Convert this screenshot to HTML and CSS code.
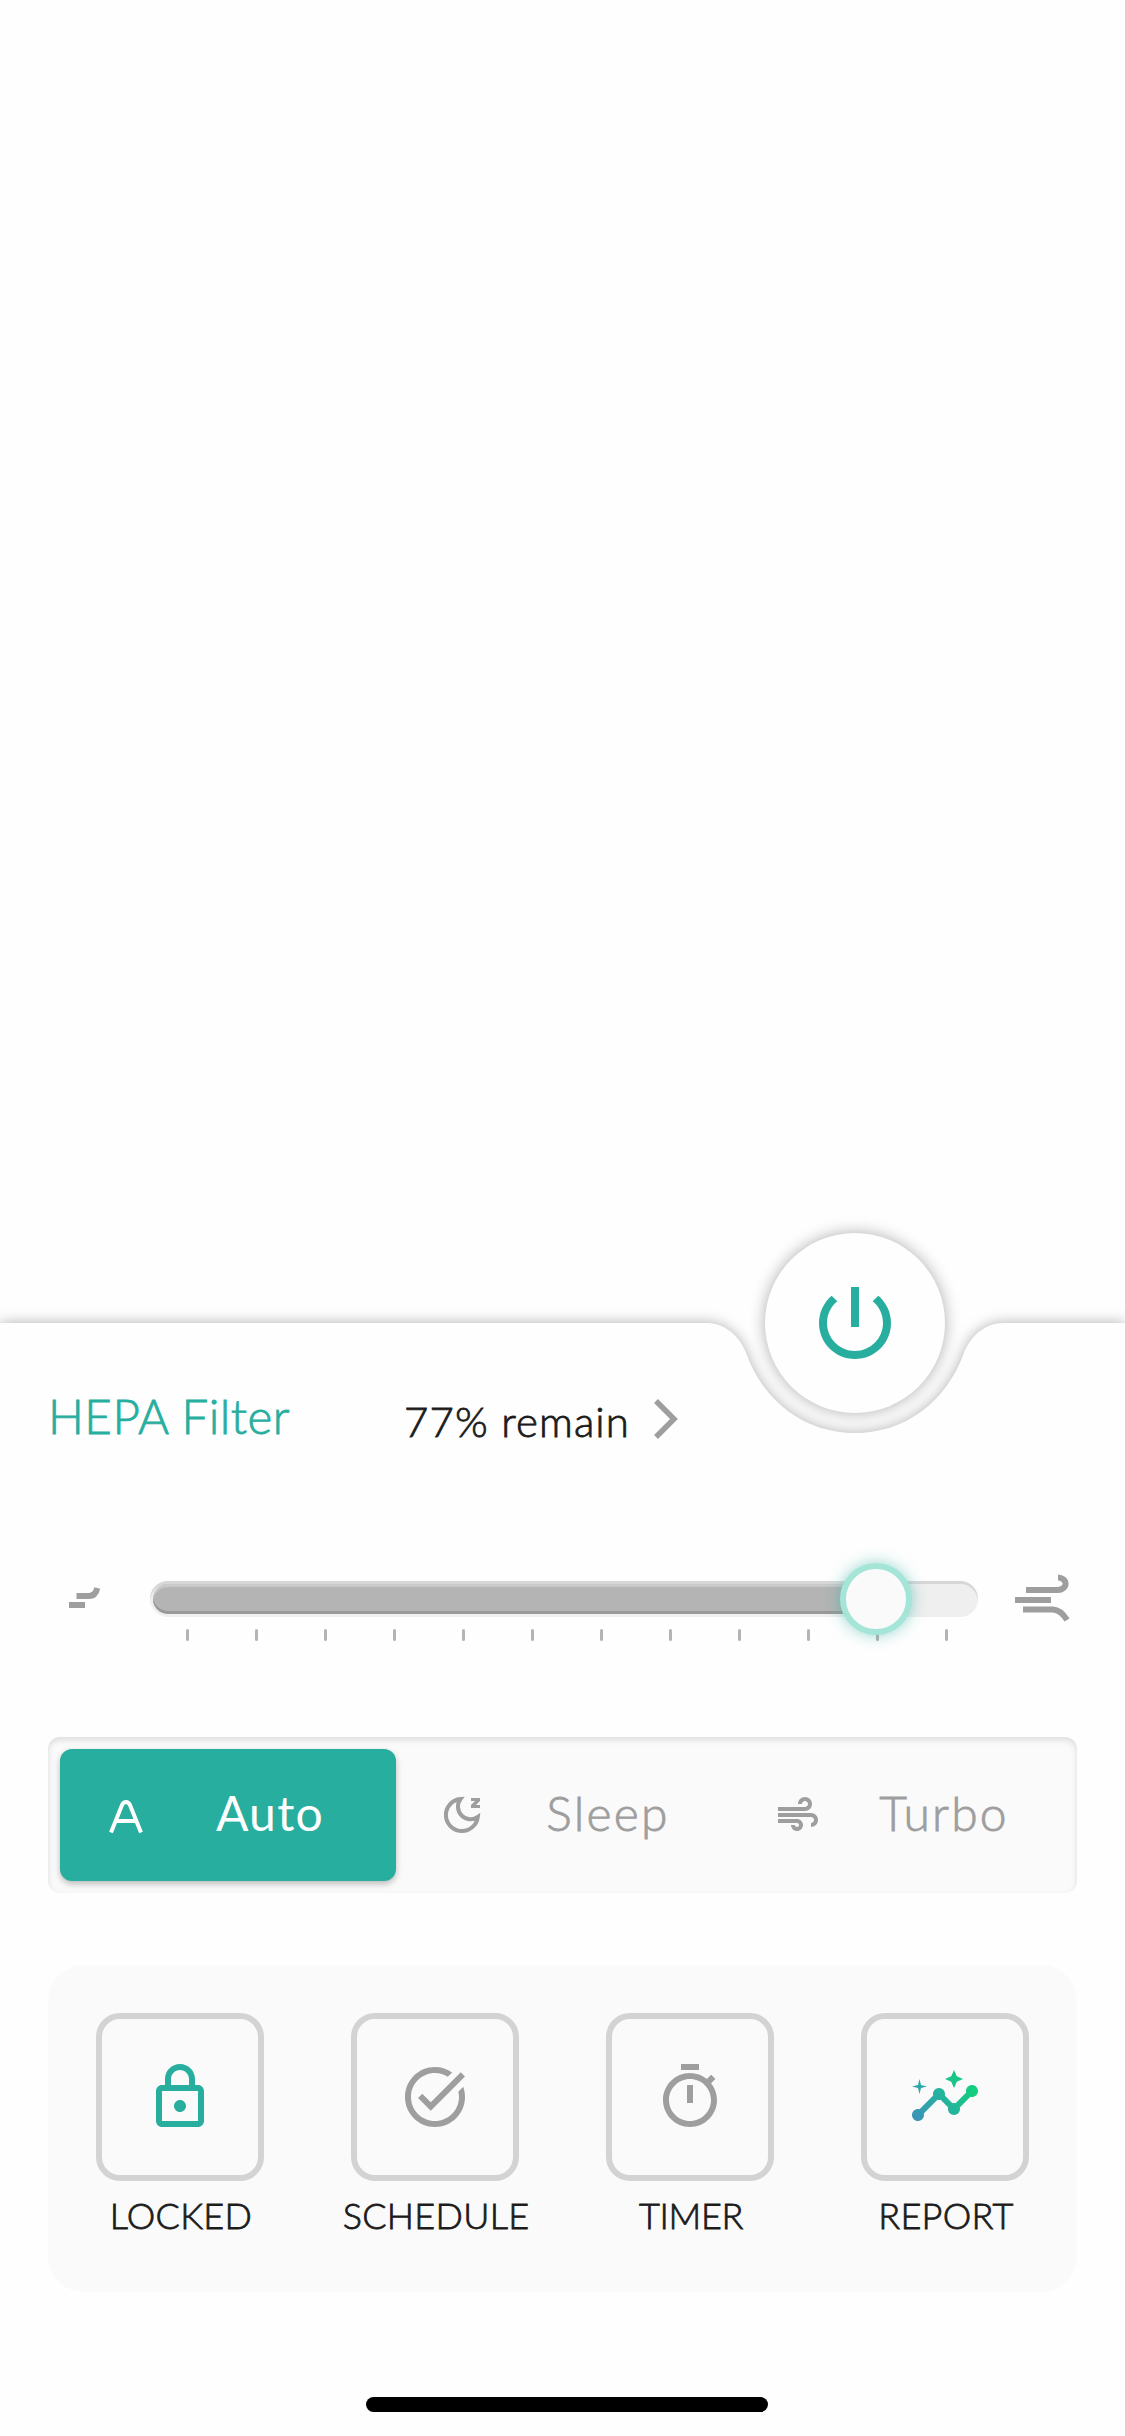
FILE: index.html
```html
<!DOCTYPE html>
<html lang="en">
<head>
<meta charset="utf-8">
<title>Air purifier</title>
<link rel="stylesheet" href="styles.css">
</head>
<body>
<main class="screen">
  <section class="panel">
    <svg class="panel-shape" width="1125" height="1113" viewBox="0 0 1125 1113">
      <path d="M0 0H707C723 0 739 11 746.500 31C764 79 805 110 855 110S946 79 963.500 31C971 11 987 0 1003 0H1125V1113H0Z"/>
    </svg>
    <button class="power" aria-label="Power">
      <svg width="96" height="96" viewBox="0 0 24 24"><path d="M13 3h-2v10h2V3zm4.83 2.17l-1.42 1.42C17.99 7.86 19 9.81 19 12c0 3.87-3.13 7-7 7s-7-3.13-7-7c0-2.19 1.01-4.14 2.58-5.42L6.17 5.17C4.23 6.82 3 9.26 3 12c0 4.97 4.03 9 9 9s9-4.03 9-9c0-2.74-1.23-5.18-3.17-6.83z"/></svg>
    </button>
    <div class="content">
      <header class="filter">
        <h1 class="filter-name">HEPA Filter</h1>
        <span class="filter-remain">77% remain</span>
        <svg class="chevron" width="24" height="40" viewBox="0 0 24 40"><path d="M2 2L20 20L2 38"/></svg>
      </header>

      <div class="speed">
        <svg class="breeze" width="32" height="24" viewBox="0 0 32 24"><path d="M0 18H16M7.500 9H20Q26.500 9 28.300 1"/></svg>
        <div class="slider">
          <div class="track"><div class="fill"></div></div>
          <div class="ticks"><i></i><i></i><i></i><i></i><i></i><i></i><i></i><i></i><i></i><i></i><i></i><i></i></div>
          <div class="thumb"></div>
        </div>
        <svg class="gust" width="56" height="48" viewBox="0 0 56 48"><path d="M11 16H43A7.500 6.200 0 0 0 43 3.500M0 26H36M8 35.500H38Q46 36 52 46"/></svg>
      </div>

      <nav class="modes">
        <button class="mode active">
          <svg class="icon" width="48" height="48" viewBox="0 0 48 48"><path class="line" d="M9 41.500L20 14Q21.500 11 24 11T28 14L39 41.500M14 30H34"/></svg>
          <span>Auto</span>
        </button>
        <button class="mode">
          <svg class="icon" width="48" height="48" viewBox="0 0 48 48"><path class="line" d="M22.500 8.100A16 16 0 1 0 39.800 26A12.600 12.600 0 0 1 22.500 8.100Z"/><path d="M33 7h9v3l-4 4h4v3h-9v-3l4-4h-4z"/></svg>
          <span>Sleep</span>
        </button>
        <button class="mode">
          <svg class="icon" width="48" height="48" viewBox="0 0 24 24"><path d="M14.500 17c0 1.650-1.350 3-3 3s-3-1.350-3-3h2c0 .55.45 1 1 1s1-.45 1-1-.45-1-1-1H2v-2h9.500c1.650 0 3 1.350 3 3zM19 6.500C19 4.570 17.430 3 15.500 3S12 4.570 12 6.500h2c0-.83.67-1.500 1.500-1.500s1.500.67 1.500 1.500S16.330 8 15.500 8H2v2h13.500c1.930 0 3.500-1.570 3.500-3.500zm-.5 4.500H2v2h16.500c.83 0 1.500.67 1.500 1.500s-.67 1.500-1.500 1.500v2c1.930 0 3.500-1.570 3.500-3.500S20.430 11 18.500 11z"/></svg>
          <span>Turbo</span>
        </button>
      </nav>

      <section class="actions">
        <div class="action">
          <button class="tile locked" aria-label="Locked"><svg width="72" height="72" viewBox="0 0 24 24"><path d="M12 17c1.100 0 2-.9 2-2s-.9-2-2-2-2 .9-2 2 .9 2 2 2zm6-9h-1V6c0-2.760-2.240-5-5-5S7 3.240 7 6v2H6c-1.100 0-2 .9-2 2v10c0 1.100.9 2 2 2h12c1.100 0 2-.9 2-2V10c0-1.100-.9-2-2-2zM9 6c0-1.660 1.340-3 3-3s3 1.340 3 3v2H9V6zm9 14H6V10h12v10z"/></svg></button>
          <span class="label">LOCKED</span>
        </div>
        <div class="action">
          <button class="tile" aria-label="Schedule"><svg width="72" height="72" viewBox="0 0 24 24"><path d="M22 5.180L10.590 16.600l-4.240-4.240 1.410-1.410 2.830 2.830 10-10L22 5.180zM19.790 10.220C19.920 10.790 20 11.390 20 12c0 4.420-3.580 8-8 8s-8-3.580-8-8c0-4.420 3.580-8 8-8 1.580 0 3.040.46 4.280 1.250l1.440-1.440C16.100 2.670 14.130 2 12 2 6.480 2 2 6.480 2 12c0 5.520 4.480 10 10 10s10-4.480 10-10c0-1.190-.22-2.330-.6-3.390l-1.610 1.610z"/></svg></button>
          <span class="label">SCHEDULE</span>
        </div>
        <div class="action">
          <button class="tile" aria-label="Timer"><svg width="72" height="72" viewBox="0 0 24 24"><path d="M15 1H9v2h6V1zm-4 13h2V8h-2v6zm8.030-6.610l1.420-1.420c-.43-.51-.9-.99-1.410-1.410l-1.420 1.420C16.070 4.740 14.120 4 12 4c-4.970 0-9 4.030-9 9s4.020 9 9 9 9-4.030 9-9c0-2.120-.74-4.070-1.970-5.610zM12 20c-3.870 0-7-3.130-7-7s3.130-7 7-7 7 3.130 7 7-3.130 7-7 7z"/></svg></button>
          <span class="label tight">TIMER</span>
        </div>
        <div class="action">
          <button class="tile" aria-label="Report"><svg width="72" height="72" viewBox="0 0 24 24">
            <defs><linearGradient id="trend" gradientUnits="userSpaceOnUse" x1="2" y1="20" x2="21" y2="8"><stop offset="0" stop-color="#3c91b8"/><stop offset=".5" stop-color="#26b1a0"/><stop offset="1" stop-color="#12d07c"/></linearGradient></defs>
            <path fill="url(#trend)" d="M21 8c-1.450 0-2.260 1.440-1.930 2.510l-3.550 3.560c-.3-.09-.74-.09-1.040 0l-2.550-2.550C12.270 10.450 11.460 9 10 9c-1.450 0-2.270 1.440-1.930 2.520l-4.560 4.550C2.440 15.740 1 16.550 1 18c0 1.100.9 2 2 2 1.450 0 2.260-1.440 1.930-2.510l4.550-4.560c.3.09.74.09 1.040 0l2.550 2.550C12.730 16.550 13.540 18 15 18c1.450 0 2.270-1.440 1.930-2.520l3.560-3.550C21.560 12.260 23 11.450 23 10c0-1.100-.9-2-2-2zM15 9l.94-2.070L18 6l-2.060-.93L15 3l-.92 2.070L12 6l2.080.93L15 9zM3.500 11L4 9l2-.5L4 8l-.5-2L3 8l-2 .5L3 9l.5 2z"/></svg></button>
          <span class="label">REPORT</span>
        </div>
      </section>
      <div class="home-bar"></div>
    </div>
  </section>
</main>
</body>
</html>
```
FILE: styles.css
```css
* { box-sizing: border-box; }
body {
  margin: 0;
  background: #fefefe;
  font-family: Lato, "Open Sans", sans-serif;
  font-weight: 300;
  -webkit-text-stroke: .8px currentColor;
  color: #1b1b1b;
}
button {
  padding: 0;
  border: 0;
  background: none;
  font: inherit;
  color: inherit;
}
svg { display: block; fill: currentColor; }

.screen {
  width: 1125px;
  height: 2436px;
  padding-top: 1323px;
  overflow: hidden;
}
.panel { position: relative; height: 1113px; }
.panel-shape {
  position: absolute;
  inset: 0;
  overflow: visible;
  fill: #fefefe;
  filter: drop-shadow(0 0 7px rgba(0, 0, 0, .31));
}
.power {
  position: absolute;
  z-index: 1;
  left: 765px;
  top: -90px;
  width: 180px;
  height: 180px;
  border-radius: 50%;
  display: grid;
  place-items: center;
  background: #fefefe;
  color: #27ae9f;
  box-shadow: 0 0 16px rgba(0, 0, 0, .32);
}

.content { position: relative; padding: 0 48px; }

.filter {
  display: flex;
  align-items: flex-start;
  height: 138px;
  padding-top: 63px;
}
.filter-name {
  width: 356px;
  margin: 0;
  font-size: 47.500px;
  line-height: 60px;
  font-weight: 300;
  letter-spacing: .5px;
  color: #27ae9f;
}
.filter-remain {
  width: 250px;
  padding-top: 5px;
  font-size: 42px;
  line-height: 60px;
  letter-spacing: 1.100px;
}
.chevron { margin-top: 13px; fill: none; stroke: #9e9e9e; stroke-width: 5.500; }

.speed {
  display: flex;
  height: 276px;
  padding: 120px 0 0 21px;
}
.speed svg { fill: none; stroke: #9e9e9e; stroke-width: 6; }
.breeze { margin-top: 6px; }
.gust { margin: -7px 0 0 37px; }
.slider { position: relative; width: 828px; margin-left: 49px; }
.track {
  height: 36px;
  padding: 3px;
  border-radius: 18px;
  background: #efefef;
  box-shadow: inset 0 3px #d7d7d7;
}
.fill {
  width: 723px;
  height: 30px;
  border-radius: 15px;
  background: #b4b4b4;
  box-shadow: inset 0 3px #c9c9c9, inset 0 -3px #999;
}
.ticks {
  display: flex;
  justify-content: space-between;
  padding: 12px 30px 0 36px;
}
.ticks i { width: 3px; height: 12px; border-radius: 1.500px; background: #b4b4b4; }
.thumb {
  position: absolute;
  left: 690px;
  top: -18px;
  width: 72px;
  height: 72px;
  border: 6px solid #a5e5d7;
  border-radius: 50%;
  background: #fafafa;
  box-shadow: 0 0 15px rgba(39, 174, 159, .5);
}

.modes {
  display: flex;
  height: 156px;
  padding: 12px 9px 12px 12px;
  border-radius: 12px;
  background: #fafafa;
  box-shadow: inset 0 3px 6px rgba(0, 0, 0, .12);
  font-size: 48px;
  color: #9e9e9e;
}
.mode {
  flex: 1;
  display: flex;
  align-items: center;
  border-radius: 12px;
}
.mode .icon { margin-left: 42px; }
.mode .line { fill: none; stroke: currentColor; stroke-width: 4; }
.mode span {
  width: 200px;
  margin: 0 0 5px 22px;
  text-align: center;
  line-height: 60px;
  letter-spacing: 2.200px;
}
.mode.active {
  background: #27ae9f;
  color: #fff;
  font-weight: 400;
  -webkit-text-stroke: 0;
  box-shadow: 0 3px 6px rgba(0, 0, 0, .25);
}
.mode.active span { letter-spacing: 1.300px; margin-left: 20px; }

.actions {
  display: flex;
  gap: 87px;
  height: 327px;
  margin-top: 72px;
  padding: 48px;
  border-radius: 36px;
  background: #fafafa;
}
.action {
  width: 168px;
  display: flex;
  flex-direction: column;
  align-items: center;
  flex: none;
}
.tile {
  width: 168px;
  height: 168px;
  border: 6px solid #d3d3d3;
  border-radius: 24px;
  display: grid;
  place-items: center;
  color: #9e9e9e;
}
.tile.locked { color: #27ae9f; }
.label {
  margin-top: 12px;
  padding-left: 2px;
  font-size: 36px;
  line-height: 44px;
  white-space: nowrap;
  letter-spacing: .3px;
}
.label.tight { letter-spacing: -.3px; }

.home-bar {
  width: 402px;
  height: 15px;
  margin: 105px 0 0 318px;
  border-radius: 8px;
  background: #000;
}
```
